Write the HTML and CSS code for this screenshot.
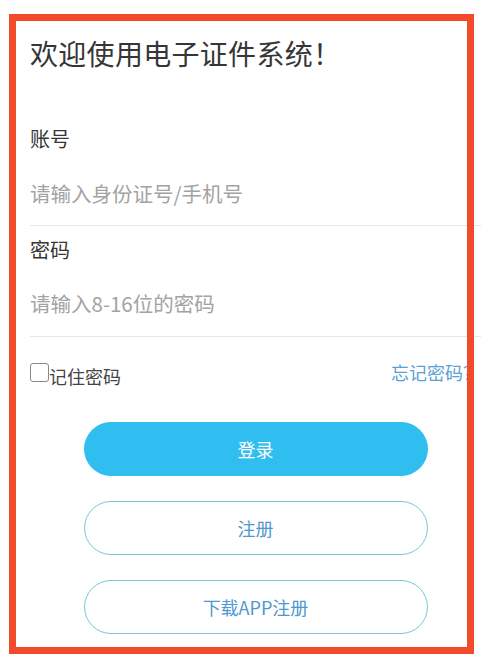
FILE: index.html
```html
<!DOCTYPE html>
<html lang="zh-CN">
<head>
<meta charset="utf-8">
<title>电子证件系统登录</title>
<link rel="stylesheet" href="styles.css">
</head>
<body>
<div class="page">
  <h1 class="title">欢迎使用电子证件系统！</h1>
  <div class="field field-first">
    <label class="label">账号</label>
    <input class="input" type="text" placeholder="请输入身份证号/手机号">
  </div>
  <div class="field field-second">
    <label class="label">密码</label>
    <input class="input" type="password" placeholder="请输入8-16位的密码">
  </div>
  <div class="options">
    <label class="remember"><span class="checkbox"></span><span class="remember-text">记住密码</span></label>
    <a class="forgot">忘记密码？</a>
  </div>
  <div class="actions">
    <button class="btn btn-primary">登录</button>
    <button class="btn btn-outline">注册</button>
    <button class="btn btn-outline">下载APP注册</button>
  </div>
</div>
<div class="highlight"></div>
</body>
</html>
```
FILE: styles.css
```css
html, body {
  margin: 0;
  padding: 0;
  background: #ffffff;
}
body {
  font-family: "Noto Sans CJK SC", "Noto Sans", sans-serif;
  width: 491px;
  height: 669px;
  overflow: hidden;
  position: relative;
}
.page {
  padding: 33px 10px 0 30px;
  display: flex;
  flex-direction: column;
}
.title {
  margin: 0;
  font-size: 28px;
  font-weight: 400;
  line-height: 40px;
  letter-spacing: 0.3px;
  color: #363636;
}
.field {
  display: flex;
  flex-direction: column;
  border-bottom: 1px solid #e6e6e6;
}
.field-first {
  margin-top: 51px;
}
.field-first .input {
  padding: 24px 0 17px;
}
.field-second {
  margin-top: 9px;
}
.field-second .input {
  padding: 23px 0 18px;
}
.label {
  font-size: 20px;
  line-height: 30px;
  color: #363636;
}
.input {
  border: none;
  outline: none;
  margin: 0;
  background: transparent;
  font-family: "Noto Sans CJK SC", "Noto Sans", sans-serif;
  font-size: 20.5px;
  line-height: 30px;
  height: 30px;
  box-sizing: content-box;
  color: #333333;
}
.input::placeholder {
  color: #a3a3a3;
}
.options {
  margin-top: 24px;
  height: 26px;
  display: flex;
  justify-content: space-between;
  align-items: flex-start;
}
.remember {
  display: flex;
  align-items: flex-start;
}
.checkbox {
  width: 19px;
  height: 19px;
  box-sizing: border-box;
  margin-top: 2px;
  border: 1.5px solid #8a8a8a;
  border-radius: 3px;
  background: #fff;
}
.remember-text {
  font-size: 18px;
  line-height: 26px;
  margin-top: 2px;
  color: #444444;
}
.forgot {
  font-size: 18px;
  line-height: 22px;
  color: #5aa1d6;
  cursor: pointer;
}
.actions {
  margin-top: 35px;
  display: flex;
  flex-direction: column;
  align-items: center;
  gap: 25px;
}
.btn {
  width: 344px;
  height: 54px;
  border-radius: 27px;
  font-family: "Noto Sans CJK SC", "Noto Sans", sans-serif;
  font-size: 18px;
  padding: 0;
  cursor: pointer;
}
.btn-primary {
  background: #30bdef;
  border: none;
  color: #ffffff;
}
.btn-outline {
  background: #ffffff;
  border: 1px solid #7cc6d8;
  color: #4f97cf;
}
.highlight {
  position: absolute;
  left: 9px;
  top: 14px;
  width: 451px;
  height: 626px;
  border: 7px solid #f24a2b;
  pointer-events: none;
}
```
